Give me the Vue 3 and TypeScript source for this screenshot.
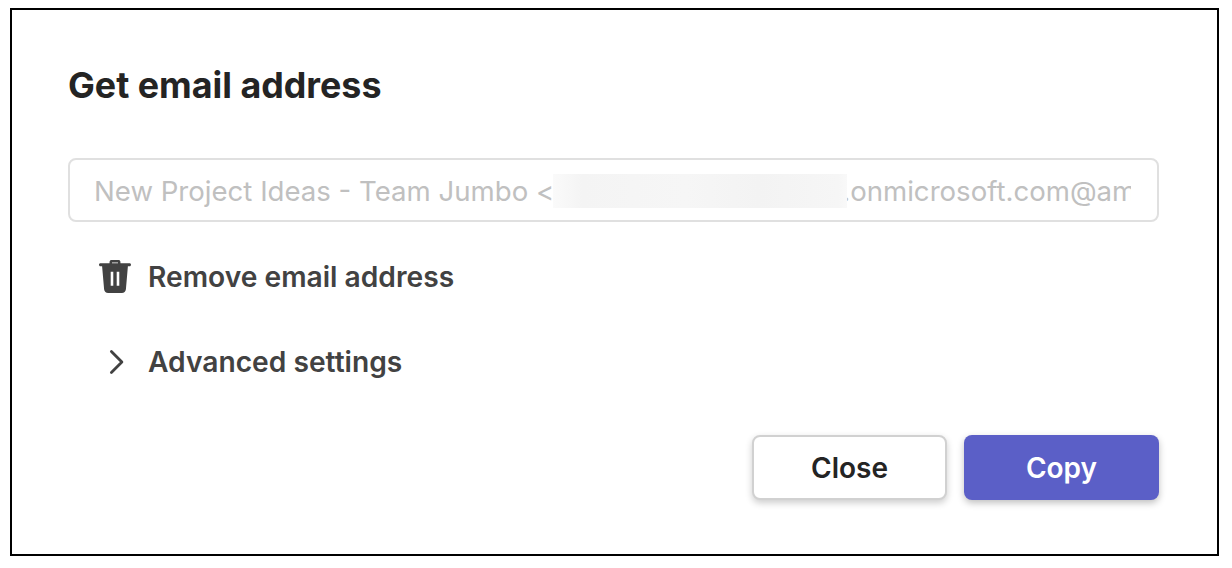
<script setup lang="ts">
const title: string = 'Get email address'
</script>

<template>
  <main class="frame">
    <h1 class="title">{{ title }}</h1>
    <div class="field">
      <div class="value">New Project Ideas - Team Jumbo &lt;<span class="blur"></span>.onmicrosoft.com@amer.teams.ms&gt;</div>
    </div>
    <div class="row row-remove">
      <span class="icon">
        <svg width="36" height="36" viewBox="0 0 36 36">
          <path fill="#424242" fill-rule="evenodd" d="M13.500 1c-1 0-1.800.7-1.900 1.700l-.1 1.600H2.400c-.8 0-1.400.6-1.400 1.500s.6 1.500 1.400 1.500h1.700l2 22.900c.2 2.200 1.900 3.800 4 3.800h13.800c2.100 0 3.800-1.600 4-3.800l2-22.900h1.700c.8 0 1.400-.6 1.400-1.500s-.6-1.500-1.400-1.500h-9.100l-.1-1.600c-.1-1-.9-1.700-1.900-1.700zM13.900 4.300l.1-.9h6l.1.9zM12.700 12.700h2.600v14h-2.600zM18.700 12.700h2.600v14h-2.600z"/>
        </svg>
      </span>
      <span class="label">Remove email address</span>
    </div>
    <div class="row row-advanced">
      <span class="icon">
        <svg width="36" height="36" viewBox="0 0 36 36">
          <path fill="none" stroke="#424242" stroke-width="2.800" stroke-linecap="round" stroke-linejoin="round" d="M13.400 7.500 23.900 18 13.400 28.500"/>
        </svg>
      </span>
      <span class="label">Advanced settings</span>
    </div>
    <div class="actions">
      <button class="btn btn-close" type="button">Close</button>
      <button class="btn btn-copy" type="button">Copy</button>
    </div>
  </main>
</template>

<style>
html, body { margin: 0; background: #fff; }
</style>

<style scoped>
.frame {
  box-sizing: border-box;
  width: 1209px;
  height: 548px;
  margin: 8px 0 0 10px;
  padding: 54px 58px 0 56px;
  border: 2px solid #000;
  background: #fff;
  display: flex;
  flex-direction: column;
  font-family: Inter, "Liberation Sans", sans-serif;
  color: #242424;
}
.title {
  margin: 0;
  font-size: 35.800px;
  line-height: 42px;
  font-weight: 700;
  color: #242424;
}
.field {
  box-sizing: border-box;
  margin-top: 52px;
  height: 64px;
  padding: 0 26px 0 24px;
  border: 2px solid #e0e0e0;
  border-radius: 8px;
  display: flex;
  align-items: center;
}
.value {
  overflow: hidden;
  white-space: nowrap;
  font-size: 27.600px;
  line-height: 36px;
  color: #c0c0c0;
  display: flex;
  align-items: center;
  height: 36px;
  padding-top: 1px;
}
.blur {
  flex: none;
  width: 294px;
  height: 34px;
  margin-left: -1px;
  margin-right: -5px;
  position: relative;
  z-index: 1;
  background: linear-gradient(90deg, #fafafa, #f4f4f4 10%, #f6f6f6 45%, #f3f3f3 70%, #f6f6f6 97%, #f9f9f9);
}
.row {
  display: flex;
  align-items: center;
  height: 36px;
  padding-left: 30px;
}
.row-remove { margin-top: 37px; }
.row-advanced { margin-top: 49px; }
.icon {
  width: 36px;
  height: 36px;
  margin-right: 14px;
  flex: none;
}
.icon svg { display: block; }
.label {
  font-size: 28.200px;
  line-height: 36px;
  font-weight: 600;
  color: #424242;
}
.actions {
  margin-top: 55px;
  display: flex;
  justify-content: flex-end;
  gap: 17px;
}
.btn {
  box-sizing: border-box;
  width: 195px;
  height: 65px;
  border-radius: 8px;
  font-family: inherit;
  font-size: 28px;
  font-weight: 600;
  padding: 0;
}
.btn-close {
  background: #fff;
  border: 2px solid #d1d1d1;
  color: #242424;
  box-shadow: 0 3px 7px rgba(0, 0, 0, 0.2);
}
.btn-copy {
  background: #5b5fc7;
  border: none;
  color: #fff;
  box-shadow: 0 3px 7px rgba(0, 0, 0, 0.25);
}
</style>
